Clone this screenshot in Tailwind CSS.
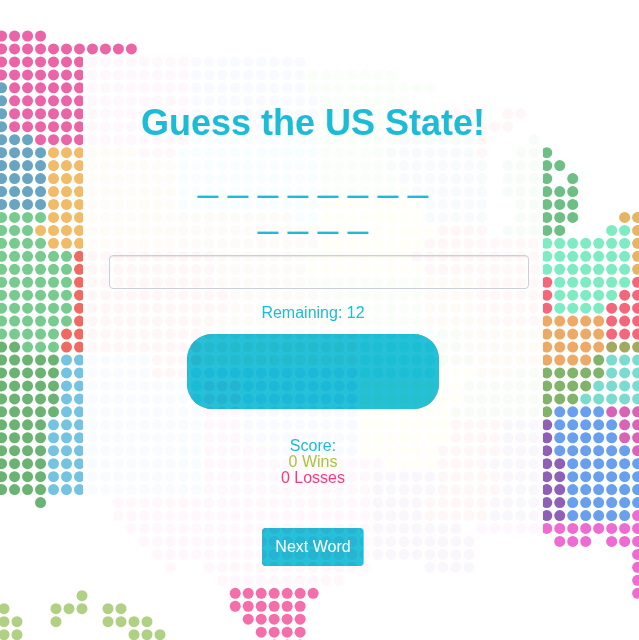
<!DOCTYPE html>
<html lang="en">
<head>
<meta charset="utf-8">
<meta name="viewport" content="width=device-width, initial-scale=1">
<title>Guess the US State!</title>
<script src="https://cdn.jsdelivr.net/npm/@tailwindcss/browser@4"></script>
</head>
<body class="relative min-h-screen overflow-hidden bg-white font-['Liberation_Sans',Arial,sans-serif] text-base leading-4 text-[#1cbcd6]">
<svg id="map" class="absolute inset-0 h-full w-full" viewBox="0 0 639 640" preserveAspectRatio="xMidYMid slice" aria-hidden="true"></svg>

<main class="relative pt-14 pr-[13px]">
  <section class="mx-auto flex max-w-[460px] flex-col bg-white/95 pr-3.5 pl-[26px] pt-[47px] pb-[21px] text-center">
    <h1 class="pr-3 text-4xl font-bold">Guess the US State!</h1>
    <div class="pr-3">
      <p class="mx-auto mt-[18px] max-w-[252px] text-4xl leading-9">_ _ _ _ _ _ _ _ _ _ _ _</p>
    </div>
    <input type="text" aria-label="Guess a letter" class="mt-[22px] h-[34px] w-full rounded border border-[#cbcfd9] bg-transparent px-3 shadow-[inset_0_1px_1px_rgba(0,0,0,0.08)]">
    <div class="flex flex-col items-center pr-3">
      <p class="mt-4">Remaining: 12</p>
      <div class="mt-[13px] h-[75px] w-full max-w-[252px] rounded-[25px] bg-[#00dbfd]/70 backdrop-brightness-50 backdrop-contrast-1000"></div>
      <div class="mt-[29px]">
        <p>Score:</p>
        <p class="text-[#a9c43f]">0 Wins</p>
        <p class="text-[#f8397c]">0 Losses</p>
      </div>
      <button type="button" class="mt-[42px] h-[38px] rounded bg-[#00dbfd]/70 px-[13px] text-white backdrop-brightness-50 backdrop-contrast-1000">Next Word</button>
    </div>
  </section>
</main>

<script>
// Each row lists runs of dots: colour key followed by count; "." leaves a gap.
const colors = {
  P: '#ea64a6', B: '#68a5c2', O: '#f2bb67', G: '#77cb8f', R: '#ef6a60', D: '#6bb373', S: '#74c3e2',
  N: '#6dbf85', M: '#7eecc2', E: '#f4677a', A: '#eda966', L: '#a3a95f', T: '#79dcce', g: '#82b36a',
  b: '#689fee', V: '#8f60b7', m: '#d864b8', K: '#ee6bd3', W: '#e6b465', F: '#f46faa',
  c: '#6fa4ee', n: '#98e07c', C: '#70e8ee', w: '#d8b070', y: '#eeee70', k: '#f06aa8'
};
const rows = [
  'P4', 'P11', 'P15 c9', 'P15 c9 n7', 'B1 P14 c9 n10', 'B1 P14 c10 n7',
  'B1 P14 c10 n5 .5 R2 .2 R2', 'B1 P14 c10 n5 .5 R5',
  'B3 P12 C10 n6 B6 R1 .3 N1',
  'B4 O7 P3 C11 n5 B7 R1 .2 N3',
  'B4 O10 C11 n5 B8 .1 N5',
  'B4 O10 C11 n6 B7 .1 N4 .1 N1',
  'B4 O10 C11 n7 B6 .1 N6',
  'B4 O10 C11 y8 B5 .2 N5',
  'G4 O10 w9 C2 y8 B5 .2 N5 .3 W2',
  'G3 O11 w11 y9 R4 .1 N5 .3 M2 W1',
  'G4 O10 w11 y8 R4 E5 M7 W1',
  'G6 R11 w7 y8 R5 E5 M7 W1',
  'G6 R11 w7 y9 R4 E5 M7 W1',
  'G6 R11 w7 n9 A4 E6 M6 E1',
  'G6 R12 w7 n8 A4 E6 M5 E2',
  'G6 R12 w8 n7 A4 E6 M4 E3',
  'G6 R11 w10 n6 A5 E4 A5 E3',
  'G5 R11 w12 M6 g2 A11 E3',
  'D2 G3 R11 w12 M6 g2 A11 L3',
  'D5 S7 R4 w12 M6 g3 A9 g1 T3',
  'D5 S7 R3 c13 M6 y3 A3 g7 T3',
  'D5 S11 P3 c9 y8 g10 T4',
  'D5 S11 P3 c9 y8 g9 T5',
  'D5 S11 P3 c9 y7 g8 b4 m3',
  'D4 S12 P3 c9 y7 R4 V4 b5 m2',
  'D4 S12 P3 c9 y7 R4 V4 b5 m2',
  'D4 S12 P5 c7 y6 R5 V4 b6 m1',
  'D4 S12 P14 y4 R4 V6 b6',
  'D4 S12 P13 V5 R5 V5 b6',
  'D4 S12 P13 V5 R5 V5 b6',
  '.3 D1 .5 k20 V4 R5 V6 b6',
  '.9 k20 V4 R5 V6 b5 K1',
  '.10 k19 V7 .1 K13',
  '.11 k18 V8 .6 K3 .1 K3',
  '.12 k17 V8 .12 K1',
  '.13 k1 .2 k13 .4 V4 .12 K1',
  '.17 k10 .22 K1',
  '.18 F7 .24 K1',
  '.18 F6', '.19 F5', '.20 F4', '.21 F3'
];
const svg = document.getElementById('map');
function dot(x, y, color) {
  const c = document.createElementNS('http://www.w3.org/2000/svg', 'circle');
  c.setAttribute('cx', x);
  c.setAttribute('cy', y);
  c.setAttribute('r', 5.5);
  c.setAttribute('fill', color);
  svg.appendChild(c);
}
rows.forEach((row, r) => {
  let col = 0;
  row.split(' ').forEach(run => {
    const count = Number(run.slice(1));
    for (let i = 0; i < count; i++, col++) {
      if (run[0] !== '.') dot(1.6 + 12.98 * col, 36 + 12.96 * r, colors[run[0]]);
    }
  });
});
// Islands sit on their own grid.
[[6], [0, 4, 5, 6, 8, 9], [0, 1, 4, 8, 9, 10, 11], [0, 1, 10, 11, 12]].forEach((cols, r) =>
  cols.forEach(col => dot(4 + 13 * col, 595.7 + 13 * r, '#b0d084')));
</script>
</body>
</html>
